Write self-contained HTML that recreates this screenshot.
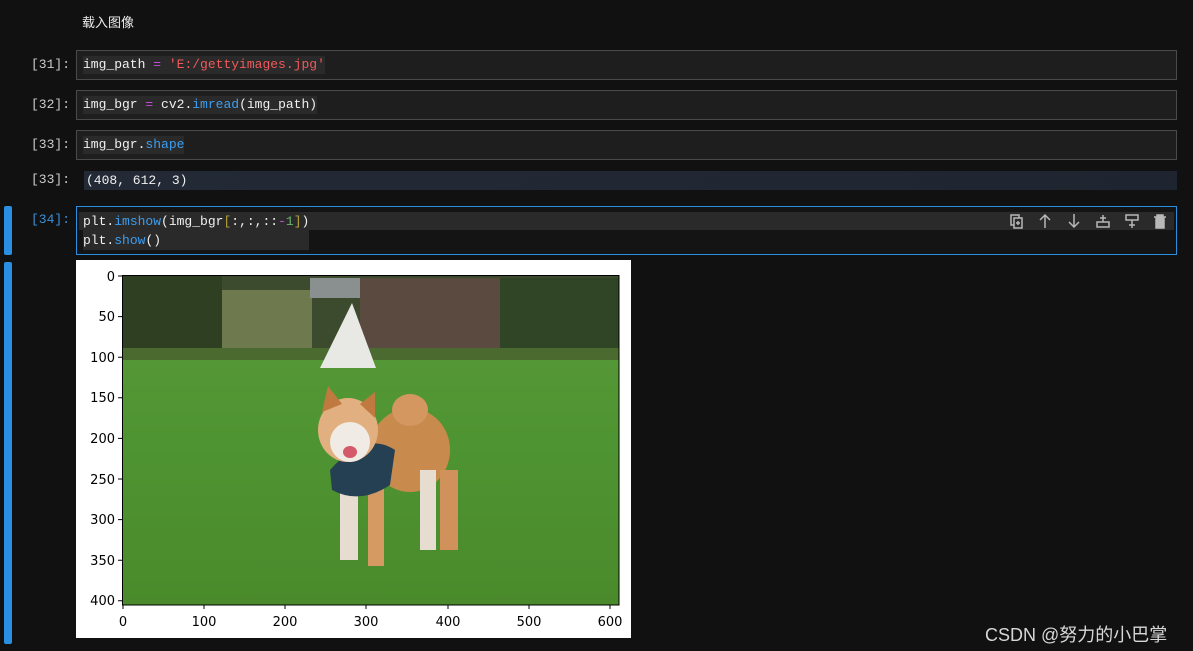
<!DOCTYPE html>
<html><head><meta charset="utf-8"><style>
body{margin:0;width:1193px;height:651px;background:#111111;overflow:hidden;position:relative;font-family:"Liberation Sans","Noto Sans CJK SC",sans-serif}
.p{position:absolute}
.mono{font-family:"Liberation Mono","DejaVu Sans Mono",monospace;font-size:13px}
.lbl{position:absolute;left:31px;color:#cccccc;font-family:"Liberation Mono",monospace;font-size:13px}
.cell{position:absolute;left:76px;width:1099px;border:1px solid #4a4a4a;background:#1e1e1e;height:28px}
.code{position:absolute;left:6px;top:5px;background:#2a2a2a;color:#f0f0f0;line-height:18px;white-space:pre}
.k{color:#c44cd9}.s{color:#f05a5a}.f{color:#3c9ef0}.n{color:#6bb26b}
</style></head><body>
<div class="p" style="left:82px;top:12px;color:#ededed;font-size:13px">载入图像</div>

<div class="lbl" style="top:57px">[31]:</div>
<div class="cell" style="top:50px"><div class="code mono">img_path <span class="k">=</span> <span class="s">'E:/gettyimages.jpg'</span></div></div>
<div class="lbl" style="top:97px">[32]:</div>
<div class="cell" style="top:90px"><div class="code mono">img_bgr <span class="k">=</span> cv2.<span class="f">imread</span>(img_path)</div></div>
<div class="lbl" style="top:137px">[33]:</div>
<div class="cell" style="top:130px"><div class="code mono">img_bgr.<span class="f">shape</span></div></div>
<div class="lbl" style="top:172px">[33]:</div>
<div class="p mono" style="left:84px;top:171px;width:1091px;height:19px;background:linear-gradient(90deg,#232a36,#1f2530);color:#f0f0f0;line-height:19px;padding-left:2px">(408, 612, 3)</div>

<div class="p" style="left:4px;top:206px;width:8px;height:49px;background:#2a8fe0;border-radius:2px"></div>
<div class="lbl" style="top:212px;color:#3c8fd8">[34]:</div>
<div class="p" style="left:76px;top:206px;width:1099px;height:47px;border:1px solid #2a8fe0;background:#141414">
 <div class="p" style="left:2px;top:5px;width:1095px;height:18px;background:#2a2a2a"></div>
 <div class="p mono" style="left:6px;top:5px;color:#f0f0f0;line-height:19px;white-space:pre;background:#2a2a2a">plt.<span class="f">imshow</span>(img_bgr<span style="color:#b5a23a">[</span>:,:,::<span class="k">-</span><span class="n">1</span><span style="color:#b5a23a">]</span>)
plt.<span class="f">show</span>()</div>
 <svg class="p" style="left:930px;top:5px" width="160" height="18" fill="none" stroke="#b8b8b8" stroke-width="1.5">
  <rect x="4" y="3" width="8" height="10"/><rect x="7" y="6" width="8" height="10" fill="#2a2a2a"/><path d="M11 9v4M9 11h4"/>
  <path d="M38 16V3M33 8l5-5 5 5"/>
  <path d="M67 2v13M62 10l5 5 5-5"/>
  <path d="M96 3v7M93 6h6M90 10h12v5H90z"/>
  <path d="M119 3h12v5h-12zM125 8v8M122 13h6"/>
  <path d="M147 5h12M150 5V3h6v2M149 6h8v10h-8z" fill="#b8b8b8"/>
 </svg>
</div>

<div class="p" style="left:4px;top:262px;width:8px;height:382px;background:#2a8fe0;border-radius:2px"></div>
<div class="p" style="left:76px;top:260px;width:555px;height:378px;background:#fff"></div>
<svg class="p" style="left:0;top:0" width="1193" height="651" font-family="DejaVu Sans,sans-serif" font-size="13">
 <defs>
  <linearGradient id="g" x1="0" y1="0" x2="0" y2="1">
   <stop offset="0" stop-color="#5a9a3a"/><stop offset="0.5" stop-color="#4f9432"/><stop offset="1" stop-color="#4a8a2c"/></linearGradient>
 </defs>
 <rect x="122" y="275" width="497" height="330" fill="url(#g)"/>
 <rect x="122" y="275" width="497" height="84" fill="#3c4a2e"/>
 <rect x="122" y="275" width="100" height="84" fill="#2e3f22"/>
 <rect x="222" y="290" width="90" height="65" fill="#6e7a4e"/>
 <rect x="360" y="278" width="140" height="72" fill="#5a4a40"/>
 <rect x="310" y="278" width="50" height="20" fill="#8a8f90"/>
 <rect x="500" y="278" width="119" height="78" fill="#2f4526"/>
 <rect x="122" y="348" width="497" height="12" fill="#4a6a30"/>
 <polygon points="352,303 320,368 376,368" fill="#e8e8e4"/>
 <ellipse cx="410" cy="450" rx="40" ry="42" fill="#c98a4e"/>
 <ellipse cx="410" cy="410" rx="18" ry="16" fill="#d49760"/>
 <rect x="340" y="470" width="18" height="90" fill="#e6dcd0"/>
 <rect x="368" y="480" width="16" height="86" fill="#d49a62"/>
 <rect x="420" y="470" width="16" height="80" fill="#e6dcd0"/>
 <rect x="440" y="470" width="18" height="80" fill="#d0925a"/>
 <path d="M330 470 Q365 430 395 450 L390 485 Q360 505 332 490Z" fill="#244052"/>
 <ellipse cx="348" cy="430" rx="30" ry="32" fill="#e2b080"/>
 <ellipse cx="350" cy="442" rx="20" ry="20" fill="#f0ebe4"/>
 <polygon points="322,412 328,386 342,404" fill="#c07a40"/>
 <polygon points="360,404 375,392 375,418" fill="#c07a40"/>
 <ellipse cx="350" cy="452" rx="7" ry="6" fill="#d45a6a"/>
 <rect x="122.5" y="275.5" width="496.5" height="329.5" fill="none" stroke="#000" stroke-width="1"/>
 <g stroke="#000">
  <path d="M123 605v4M204 605v4M285 605v4M366 605v4M448 605v4M529 605v4M610 605v4"/>
  <path d="M122 276h-4M122 316.6h-4M122 357.2h-4M122 397.8h-4M122 438.4h-4M122 479h-4M122 519.6h-4M122 560.2h-4M122 600.8h-4"/>
 </g>
 <g fill="#000" text-anchor="middle">
  <text x="123" y="626">0</text><text x="204" y="626">100</text><text x="285" y="626">200</text><text x="366" y="626">300</text><text x="448" y="626">400</text><text x="529" y="626">500</text><text x="610" y="626">600</text>
 </g>
 <g fill="#000" text-anchor="end">
  <text x="115" y="281">0</text><text x="115" y="321">50</text><text x="115" y="362">100</text><text x="115" y="402">150</text><text x="115" y="443">200</text><text x="115" y="484">250</text><text x="115" y="524">300</text><text x="115" y="565">350</text><text x="115" y="605">400</text>
 </g>
</svg>
<div class="p" style="left:985px;top:621px;color:#d8d8d8;font-size:18px">CSDN @努力的小巴掌</div>
</body></html>
